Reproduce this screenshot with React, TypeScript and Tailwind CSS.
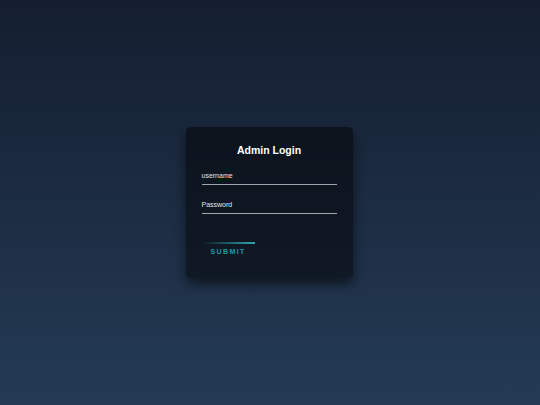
import React from "react";

export default function App() {
  return (
    <div className="min-h-[405px] w-full flex items-center justify-center bg-gradient-to-b from-[#141e30] to-[#243b55] [font-family:'Liberation_Sans',Arial,sans-serif]">
      <div className="w-[167px] h-[151px] -translate-x-[1px] rounded-[5px] bg-[rgba(0,0,0,0.5)] shadow-[0_6px_12px_rgba(0,0,0,0.55)] px-[16px] pt-[16px] flex flex-col">
        <h2 className="text-[10.5px] leading-[14px] font-bold text-white text-center">Admin Login</h2>
        <div className="mt-[14px] pb-[3px] border-b border-[rgba(255,255,255,0.62)]">
          <div className="text-[7px] leading-[10px] text-[#e2e4e8]">username</div>
        </div>
        <div className="mt-[15px] pb-[3px] border-b border-[rgba(255,255,255,0.62)]">
          <div className="text-[7px] leading-[10px] text-[#e2e4e8]">Password</div>
        </div>
        <button className="mt-[28px] self-start w-[53px] flex flex-col bg-transparent">
          <span className="block h-[2px] w-full bg-gradient-to-r from-transparent to-[#2fa3ae]" />
          <span className="block mt-[3px] pl-[9px] text-left text-[7px] leading-[10px] font-bold tracking-[0.2em] text-[#1d9ca8]">SUBMIT</span>
        </button>
      </div>
    </div>
  );
}
